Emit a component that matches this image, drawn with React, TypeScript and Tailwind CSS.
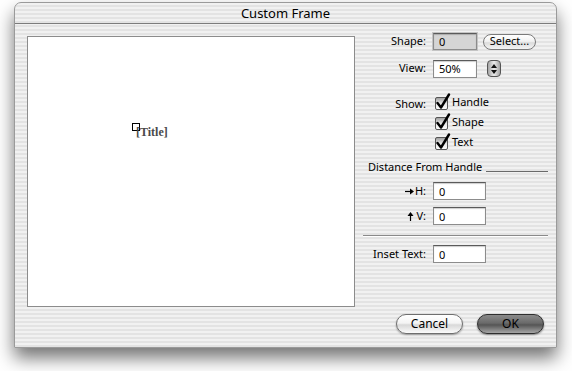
import React from "react";

const stripes =
  "bg-[repeating-linear-gradient(180deg,#f1f1f1_0px,#f1f1f1_2px,#e3e3e3_2px,#e3e3e3_4px)]";

function Field({ value, w = "w-[53px]", h = "h-[18px]", gray = false }: { value: string; w?: string; h?: string; gray?: boolean }) {
  return (
    <div
      className={`${w} ${h} flex items-center pl-[5px] text-[11px] leading-none text-black border border-[#8c8c8c] border-t-[#5a5a5a] shadow-[inset_0_1px_1px_rgba(0,0,0,0.2)] ${
        gray ? "bg-[#d5d5d5] outline outline-1 outline-[#c4c4c4]" : "bg-white"
      }`}
    >
      {value}
    </div>
  );
}

function Check({ label }: { label: string }) {
  return (
    <div className="flex items-center h-[20px]">
      <svg width="17" height="18" viewBox="0 0 17 18" className="ml-[1px]">
        <defs>
          <linearGradient id="cb" x1="0" y1="0" x2="0" y2="1">
            <stop offset="0" stopColor="#9a9a9a" />
            <stop offset="0.5" stopColor="#e8e8e8" />
            <stop offset="1" stopColor="#ffffff" />
          </linearGradient>
        </defs>
        <rect x="1.5" y="4.5" width="12" height="12" rx="1.5" fill="url(#cb)" stroke="#555" strokeWidth="1" />
        <path d="M3.5 10 L7 14.5 L15 1.5" fill="none" stroke="#000" strokeWidth="2.4" strokeLinecap="round" strokeLinejoin="round" />
      </svg>
      <span className="ml-[1px] text-[11px] text-black">{label}</span>
    </div>
  );
}

export default function App() {
  return (
    <div className="w-[572px] h-[371px] bg-white overflow-hidden pt-[2px] pl-[14px] font-['Noto_Sans',sans-serif]">
      <div
        className={`w-[543px] h-[346px] flex flex-col rounded-t-[7px] border border-[#9a9a9a] ${stripes} shadow-[0_10px_18px_rgba(0,0,0,0.55)]`}
      >
        <div className="h-[21px] flex items-center justify-center border-b border-[#7c7c7c] text-[13px] text-black leading-none">
          Custom Frame
        </div>
        <div className="flex flex-1 pl-[12px] pt-[9px]">
          <div className="mt-[3px] w-[328px] h-[271px] border border-[#8c8c8c] bg-white relative">
            <div className="absolute left-[104px] top-[86px] w-[8px] h-[8px] border border-black bg-white" />
            <div className="absolute left-[108px] top-[88px] text-[12px] font-bold text-[#4a4a4a] font-['Liberation_Serif',serif] leading-[14px]">
              [Title]
            </div>
          </div>
          <div className="ml-[8px] w-[186px] flex flex-col pb-[13px]">
            {/* Shape row */}
            <div className="flex items-center h-[17px]">
              <div className="w-[64px] text-right text-[11px] pr-[1px]">Shape:</div>
              <div className="ml-[6px]">
                <Field value="0" w="w-[44px]" h="h-[17px]" gray />
              </div>
              <div className="ml-[6px] w-[53px] h-[16px] rounded-full border border-[#7a7a7a] bg-[linear-gradient(180deg,#ffffff_0%,#f2f2f2_45%,#dcdcdc_55%,#f4f4f4_100%)] flex items-center justify-center text-[11px]">
                Select...
              </div>
            </div>
            {/* View row */}
            <div className="flex items-center h-[17px] mt-[10px]">
              <div className="w-[64px] text-right text-[11px] pr-[1px]">View:</div>
              <div className="ml-[6px]">
                <Field value="50%" w="w-[44px]" h="h-[18px]" />
              </div>
              <div className="ml-[10px] w-[14px] h-[17px] rounded-[4px] border border-[#555] bg-[linear-gradient(90deg,#a4a4a4,#ececec_50%,#a4a4a4)] flex flex-col items-center justify-center gap-[2px]">
                <svg width="6" height="4" viewBox="0 0 6 4"><path d="M0 4 L3 0 L6 4 Z" fill="#111" /></svg>
                <svg width="6" height="4" viewBox="0 0 6 4"><path d="M0 0 L3 4 L6 0 Z" fill="#111" /></svg>
              </div>
            </div>
            {/* Show */}
            <div className="flex mt-[15px]">
              <div className="w-[64px] text-right text-[11px] pr-[1px] h-[20px] leading-[24px]">Show:</div>
              <div className="ml-[6px] flex flex-col">
                <Check label="Handle" />
                <Check label="Shape" />
                <Check label="Text" />
              </div>
            </div>
            {/* Distance heading */}
            <div className="flex items-center mt-[8px] h-[14px]">
              <div className="ml-[5px] text-[11px] whitespace-nowrap">Distance From Handle</div>
              <div className="flex-1 ml-[4px] mt-[8px] h-[1px] bg-[#6a6a6a] mr-[1px]" />
            </div>
            <div className="flex items-center h-[18px] mt-[8px]">
              <div className="w-[64px] text-right text-[11px] pr-[1px] flex items-center justify-end">
                <svg width="9" height="7" viewBox="0 0 9 7" className="mr-[1px]">
                  <path d="M0 3.5 H6" stroke="#000" strokeWidth="1.2" />
                  <path d="M5 0.5 L9 3.5 L5 6.5 Z" fill="#000" />
                </svg>
                H:
              </div>
              <div className="ml-[6px]">
                <Field value="0" />
              </div>
            </div>
            <div className="flex items-center h-[18px] mt-[7px]">
              <div className="w-[64px] text-right text-[11px] pr-[1px] flex items-center justify-end">
                <svg width="7" height="9" viewBox="0 0 7 9" className="mr-[2px]">
                  <path d="M3.5 3 V9" stroke="#000" strokeWidth="1.2" />
                  <path d="M0.5 4 L3.5 0 L6.5 4 Z" fill="#000" />
                </svg>
                V:
              </div>
              <div className="ml-[6px]">
                <Field value="0" />
              </div>
            </div>
            <div className="mt-[10px] h-[2px] mr-[1px] border-t border-[#8a8a8a] border-b border-b-white" />
            <div className="flex items-center h-[18px] mt-[8px]">
              <div className="w-[64px] text-right text-[11px] pr-[1px]">Inset Text:</div>
              <div className="ml-[6px]">
                <Field value="0" />
              </div>
            </div>
            <div className="mt-auto flex justify-end gap-[14px] mr-[5px]">
              <div className="w-[67px] h-[20px] rounded-full border border-[#6e6e6e] bg-[linear-gradient(180deg,#ffffff_0%,#f4f4f4_45%,#d8d8d8_55%,#fbfbfb_100%)] shadow-[0_1px_2px_rgba(0,0,0,0.35)] flex items-center justify-center text-[12px]">
                Cancel
              </div>
              <div className="w-[67px] h-[20px] rounded-full border border-[#2e2e2e] bg-[linear-gradient(180deg,#8a8a8a_0%,#6a6a6a_45%,#555555_55%,#a6a6a6_100%)] shadow-[0_1px_2px_rgba(0,0,0,0.45)] flex items-center justify-center text-[12px] text-black">
                OK
              </div>
            </div>
          </div>
        </div>
      </div>
    </div>
  );
}
